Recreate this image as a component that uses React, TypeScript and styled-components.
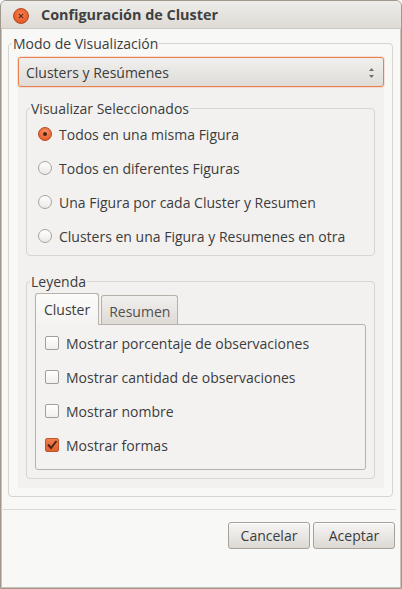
import React from "react";
import styled, { createGlobalStyle } from "styled-components";

const GlobalStyle = createGlobalStyle`
  html, body { margin: 0; padding: 0; background: #f8f8f7; }
  body { font-family: "Open Sans", "Noto Sans", sans-serif; font-size: 14px; color: #3c3c3c; }
  * { box-sizing: border-box; }
`;

const Window = styled.div`
  width: 402px;
  height: 589px;
  display: flex;
  flex-direction: column;
  border: 1px solid #a0988d;
  border-radius: 6px 6px 0 0;
  box-shadow: inset 1px 0 0 #c9c2b8, inset -1px 0 0 #c9c2b8, inset 0 -1px 0 #c9c2b8;
  background: #f8f8f7;
  overflow: hidden;
`;

const TitleBar = styled.div`
  height: 28px;
  flex: none;
  display: flex;
  align-items: center;
  padding-left: 12px;
  gap: 12px;
  background: linear-gradient(#eeece9, #dedbd6);
  border-bottom: 1px solid #cdc8c0;
`;

const CloseButton = styled.div`
  width: 16px;
  height: 16px;
  margin-top: 3px;
  border-radius: 50%;
  background: radial-gradient(circle at 50% 40%, #f5865a 0%, #e9602e 60%, #d4501f 100%);
  border: 1px solid #b9491d;
  display: flex;
  align-items: center;
  justify-content: center;
`;

const Title = styled.div`
  font-weight: 700;
  font-size: 14.4px;
  color: #404040;
  line-height: 17px;
`;

const Content = styled.div`
  padding: 6px 8px 0 7px;
`;

const Frame = styled.fieldset<{ $mt?: number; $mx?: string }>`
  margin: ${(p) => p.$mt ?? 0}px ${(p) => p.$mx ?? "0"};
  padding: 0;
  min-width: 0;
  border: 1px solid #d8d4ce;
  border-radius: 4px;
`;

const Legend = styled.legend`
  margin-left: 3px;
  padding: 0 1px;
  line-height: 17px;
  font-size: 14px;
  color: #3c3c3c;
`;

const Panel = styled.div`
  margin: 5px 8px 8px 9px;
  background: #f2f1f0;
  display: flex;
  flex-direction: column;
  padding-bottom: 9px;
`;

const Combo = styled.div`
  height: 30px;
  display: flex;
  align-items: center;
  justify-content: space-between;
  padding: 0 8px 0 7px;
  border: 1px solid #e8804f;
  border-radius: 3px;
  background: linear-gradient(#f1f0ee, #dfdcd8);
  box-shadow: 0 0 0 1px rgba(240, 150, 110, 0.25);
  color: #3c3c3c;
`;

const Spinner = styled.svg`
  width: 7px;
  height: 14px;
  margin-top: 1px;
`;

const Options = styled.div<{ $pt: number; $pb: number }>`
  display: flex;
  flex-direction: column;
  padding: ${(p) => p.$pt}px 0 ${(p) => p.$pb}px 11px;
`;

const OptionRow = styled.div`
  height: 34px;
  display: flex;
  align-items: center;
  gap: 7px;
  white-space: nowrap;
`;

const Radio = styled.span<{ $on?: boolean }>`
  width: 14px;
  height: 14px;
  flex: none;
  border-radius: 50%;
  border: 1px solid ${(p) => (p.$on ? "#b44a1f" : "#a8a39c")};
  background: ${(p) =>
    p.$on
      ? "radial-gradient(circle at 50% 35%, #f7946a 0%, #e8632f 70%, #dc5722 100%)"
      : "linear-gradient(#ffffff, #ebe9e7)"};
  display: flex;
  align-items: center;
  justify-content: center;
  &::after {
    content: "";
    width: 4px;
    height: 4px;
    border-radius: 50%;
    background: ${(p) => (p.$on ? "#4a2212" : "transparent")};
  }
`;

const Check = styled.span<{ $on?: boolean }>`
  width: 14px;
  height: 14px;
  flex: none;
  border-radius: 2px;
  border: 1px solid ${(p) => (p.$on ? "#c0552a" : "#a39e97")};
  background: ${(p) => (p.$on ? "linear-gradient(#f07f4f, #e0602c)" : "linear-gradient(#ffffff, #f0efed)")};
  display: flex;
  align-items: center;
  justify-content: center;
`;

const Tabs = styled.div`
  margin: 3px 8px 8px 8px;
  display: flex;
  flex-direction: column;
`;

const TabStrip = styled.div`
  display: flex;
  align-items: flex-end;
  gap: 2px;
`;

const Tab = styled.div<{ $active?: boolean }>`
  height: ${(p) => (p.$active ? 32 : 29)}px;
  padding: 0 ${(p) => (p.$active ? 8 : 7)}px;
  display: flex;
  align-items: center;
  border: 1px solid #b7b1a9;
  border-bottom: none;
  border-radius: 3px 3px 0 0;
  background: ${(p) => (p.$active ? "linear-gradient(#fbfbfa, #f4f3f2)" : "linear-gradient(#f2f0ee, #dedad5)")};
  color: ${(p) => (p.$active ? "#3c3c3c" : "#505050")};
  position: relative;
  z-index: ${(p) => (p.$active ? 1 : 0)};
  margin-bottom: ${(p) => (p.$active ? -1 : 0)}px;
  padding-top: ${(p) => (p.$active ? 0 : 3)}px;
`;

const TabPanel = styled.div`
  border: 1px solid #b7b1a9;
  border-radius: 0 3px 3px 3px;
  background: #f3f2f1;
  display: flex;
  flex-direction: column;
  padding: 1px 0 7px 9px;
`;

const Separator = styled.div`
  height: 1px;
  margin: 12px 5px 0 0;
  background: #dedad5;
`;

const ButtonBar = styled.div`
  display: flex;
  justify-content: flex-end;
  gap: 3px;
  padding: 12px 6px 0 0;
`;

const Button = styled.button`
  width: 82px;
  height: 27px;
  font: inherit;
  font-size: 14px;
  color: #3c3c3c;
  border: 1px solid #a7a198;
  border-radius: 3px;
  background: linear-gradient(#f7f6f5, #dcd9d4);
  box-shadow: inset 0 1px 0 #ffffff;
  padding: 0;
`;

const radios = [
  "Todos en una misma Figura",
  "Todos en diferentes Figuras",
  "Una Figura por cada Cluster y Resumen",
  "Clusters en una Figura y Resumenes en otra",
];

const checks: [string, boolean][] = [
  ["Mostrar porcentaje de observaciones", false],
  ["Mostrar cantidad de observaciones", false],
  ["Mostrar nombre", false],
  ["Mostrar formas", true],
];

export default function App() {
  return (
    <>
      <GlobalStyle />
      <Window>
        <TitleBar>
          <CloseButton>
            <svg width="6" height="6" viewBox="0 0 6 6">
              <path d="M0.8 0.8 L5.2 5.2 M5.2 0.8 L0.8 5.2" stroke="#5a2614" strokeWidth="1.1" />
            </svg>
          </CloseButton>
          <Title>Configuración de Cluster</Title>
        </TitleBar>
        <Content>
          <Frame>
            <Legend>Modo de Visualización</Legend>
            <Panel>
              <Combo>
                <span>Clusters y Resúmenes</span>
                <Spinner viewBox="0 0 7 14">
                  <path d="M3.5 2 L6 5 L1 5 Z" fill="#6f6f6f" />
                  <path d="M3.5 12 L6 9 L1 9 Z" fill="#6f6f6f" />
                </Spinner>
              </Combo>
              <Frame $mt={13} $mx="9px 0 8px">
                <Legend>Visualizar Seleccionados</Legend>
                <Options $pt={0} $pb={2}>
                  {radios.map((r, i) => (
                    <OptionRow key={r}>
                      <Radio $on={i === 0} />
                      {r}
                    </OptionRow>
                  ))}
                </Options>
              </Frame>
              <Frame $mt={17} $mx="9px 0 8px">
                <Legend>Leyenda</Legend>
                <Tabs>
                  <TabStrip>
                    <Tab $active>Cluster</Tab>
                    <Tab>Resumen</Tab>
                  </TabStrip>
                  <TabPanel>
                    {checks.map(([t, on]) => (
                      <OptionRow key={t}>
                        <Check $on={on}>
                          {on && (
                            <svg width="12" height="12" viewBox="0 0 12 12">
                              <path d="M2 5.5 L5 9 L10.5 2" fill="none" stroke="#4f2415" strokeWidth="2" />
                            </svg>
                          )}
                        </Check>
                        {t}
                      </OptionRow>
                    ))}
                  </TabPanel>
                </Tabs>
              </Frame>
            </Panel>
          </Frame>
        </Content>
        <Separator />
        <ButtonBar>
          <Button>Cancelar</Button>
          <Button>Aceptar</Button>
        </ButtonBar>
      </Window>
    </>
  );
}
